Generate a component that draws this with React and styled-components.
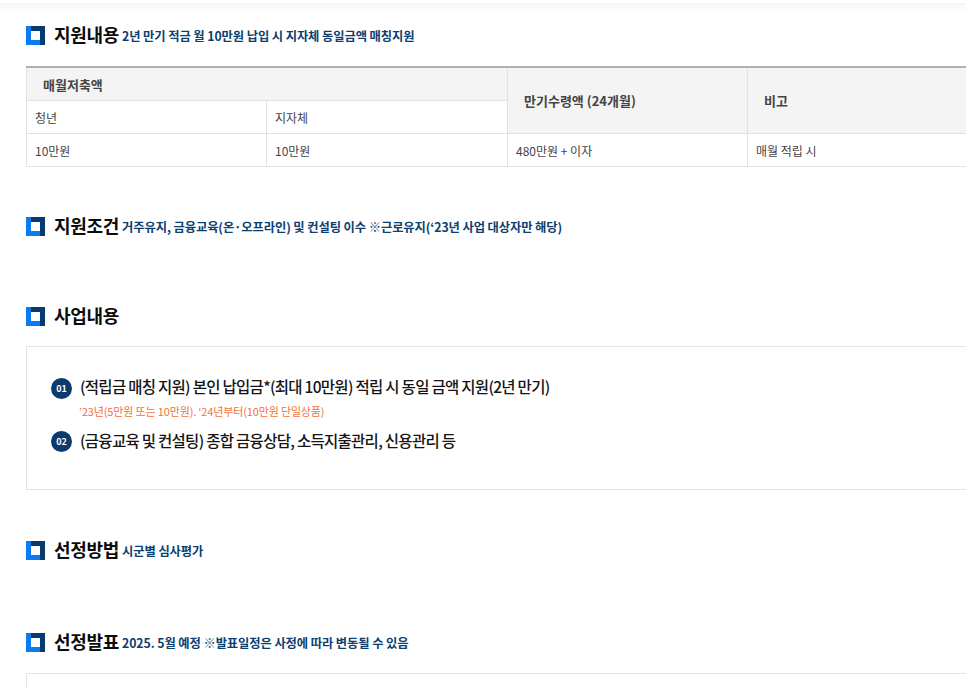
import styled, { createGlobalStyle } from 'styled-components'

const GlobalStyle = createGlobalStyle`
    html, body {
        margin: 0;
        padding: 0;
        background: #ffffff;
        overflow: hidden;
    }
    body {
        font-family: "Noto Sans CJK KR", "Noto Sans", sans-serif;
    }
`

const Page = styled.div`
    width: 966px;
    height: 687px;
    overflow: hidden;
    position: relative;
`
const TopShade = styled.div`
    height: 9px;
    margin-top: 3px;
    background: linear-gradient(#f4f4f4, #ffffff);
`
const Content = styled.main`
    width: 1200px;
    padding: 14px 0 0 26px;
`
const Heading = styled.div`
    display: flex;
    align-items: center;
    height: 19px;
    margin-top: ${(p) => p.$top}px;
`
const Marker = styled.svg`
    width: 19px;
    height: 19px;
    flex: none;
    margin-right: 9px;
`
const Title = styled.h3`
    margin: 0 3px 2px 0;
    font-size: 18px;
    font-weight: 700;
    letter-spacing: -0.3px;
    line-height: 19px;
    color: #0c0c0c;
`
const Subtitle = styled.span`
    font-size: 12.3px;
    font-weight: 700;
    line-height: 19px;
    color: #0b4070;
    letter-spacing: -0.1px;
    padding-top: 1px;
`
const Table = styled.table`
    margin-top: 21px;
    border-collapse: collapse;
    table-layout: fixed;
    width: 1200px;
    border-top: 2px solid #b0b0b0;
    border-left: 1px solid #e2e2e2;
    font-size: 12px;
    color: #444444;
`
const HeadCell = styled.th`
    background: #f4f4f4;
    border: 1px solid #e2e2e2;
    border-top: 0;
    height: 32px;
    padding: 0 0 0 16px;
    text-align: left;
    font-size: 13px;
    font-weight: 700;
    color: #444444;
`
const Cell = styled.td`
    border: 1px solid #e2e2e2;
    height: 32px;
    padding: 0 0 0 8px;
    text-align: left;
`
const Box = styled.div`
    width: 1200px;
    height: ${(p) => p.$height}px;
    margin-top: ${(p) => p.$top}px;
    box-sizing: border-box;
    border: 1px solid #e4e4e4;
    padding: 29px 0 0 24px;
`
const Item = styled.div`
    display: flex;
    align-items: center;
    height: 24px;
`
const Badge = styled.span`
    width: 21px;
    height: 21px;
    flex: none;
    margin-right: 8px;
    border-radius: 50%;
    background: #0b3a6f;
    color: #ffffff;
    font-size: 9px;
    font-weight: 700;
    display: flex;
    align-items: center;
    justify-content: center;
`
const ItemText = styled.span`
    font-size: 15.5px;
    font-weight: 500;
    letter-spacing: -0.72px;
    color: #151515;
    padding-bottom: ${(p) => p.$lift}px;
`
const Note = styled.p`
    margin: 4px 0 10px 28px;
    font-size: 11px;
    line-height: 15px;
    letter-spacing: -0.15px;
    color: #f5703c;
`

function SectionMarker() {
    return (
        <Marker viewBox="0 0 19 19">
            <rect width="19" height="19" fill="#0a7bf0" />
            <path d="M5 0H19V19H14V5H5Z" fill="#073b70" />
            <rect x="5" y="5" width="9" height="9" fill="#ffffff" />
        </Marker>
    )
}

function Section({ top, title, sub }) {
    return (
        <Heading $top={top}>
            <SectionMarker />
            <Title>{title}</Title>
            {sub && <Subtitle>{sub}</Subtitle>}
        </Heading>
    )
}

export default function App() {
    return (
        <Page>
            <GlobalStyle />
            <TopShade />
            <Content>
                <Section top={0} title="지원내용" sub="2년 만기 적금 월 10만원 납입 시 지자체 동일금액 매칭지원" />
                <Table>
                    <colgroup>
                        <col width="240" />
                        <col width="241" />
                        <col width="240" />
                        <col width="240" />
                        <col />
                    </colgroup>
                    <thead>
                        <tr>
                            <HeadCell colSpan="2">매월저축액</HeadCell>
                            <HeadCell rowSpan="2">만기수령액 (24개월)</HeadCell>
                            <HeadCell rowSpan="2">비고</HeadCell>
                        </tr>
                        <tr>
                            <Cell>청년</Cell>
                            <Cell>지자체</Cell>
                        </tr>
                    </thead>
                    <tbody>
                        <tr>
                            <Cell>10만원</Cell>
                            <Cell>10만원</Cell>
                            <Cell>480만원 + 이자</Cell>
                            <Cell>매월 적립 시</Cell>
                        </tr>
                    </tbody>
                </Table>
                <Section top={50} title="지원조건" sub="거주유지, 금융교육(온·오프라인) 및 컨설팅 이수 ※근로유지(‘23년 사업 대상자만 해당)" />
                <Section top={71} title="사업내용" />
                <Box $top={20} $height={144}>
                    <Item>
                        <Badge>01</Badge>
                        <ItemText $lift={4}>(적립금 매칭 지원) 본인 납입금*(최대 10만원) 적립 시 동일 금액 지원(2년 만기)</ItemText>
                    </Item>
                    <Note>’23년(5만원 또는 10만원). ‘24년부터(10만원 단일상품)</Note>
                    <Item>
                        <Badge>02</Badge>
                        <ItemText $lift={2}>(금융교육 및 컨설팅) 종합 금융상담, 소득지출관리, 신용관리 등</ItemText>
                    </Item>
                </Box>
                <Section top={51} title="선정방법" sub="시군별 심사평가" />
                <Section top={73} title="선정발표" sub="2025. 5월 예정 ※발표일정은 사정에 따라 변동될 수 있음" />
                <Box $top={21} $height={100} />
            </Content>
        </Page>
    )
}
